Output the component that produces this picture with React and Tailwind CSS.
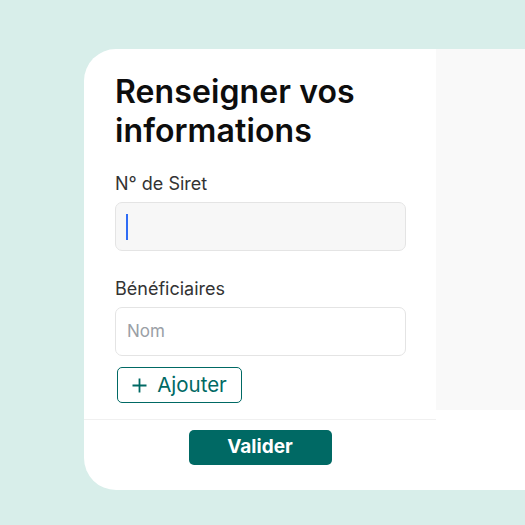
export default function App() {
  return (
    <div className="w-[525px] h-[525px] bg-[#d8eeea] pt-[49px] pl-[84px] overflow-hidden" style={{ fontFamily: "Inter, 'Noto Sans', sans-serif" }}>
      <div className="flex h-[441px] bg-white rounded-l-[32px] overflow-hidden">
        <div className="w-[352px] flex flex-col">
          <div className="pl-[31px] pr-[30px] pt-[23px] h-[371px] border-b border-[#f0f0f0]">
            <h1 className="text-[32px] leading-[39px] font-semibold text-[#0d0d0d] tracking-[0.1px]">
              Renseigner vos informations
            </h1>
            <div className="mt-[20px] text-[18px] leading-[27px] text-[#333]">N° de Siret</div>
            <div className="mt-[5px] h-[49px] rounded-[7px] border border-[#e4e4e4] bg-[#f7f7f7] flex items-center pl-[10px]">
              <div className="w-[2px] h-[26px] bg-[#2f6cf5]" />
            </div>
            <div className="mt-[24px] text-[18px] leading-[27px] text-[#333]">Bénéficiaires</div>
            <div className="mt-[5px] h-[49px] rounded-[7px] border border-[#e4e4e4] bg-white flex items-center pl-[11px] text-[17px] text-[#9aa0a6]">
              Nom
            </div>
            <button className="mt-[11px] ml-[2px] w-[125px] h-[36px] rounded-[5px] border-[1.5px] border-[#006964] text-[#006964] flex items-center justify-center gap-[10px] text-[20.5px]">
              <svg width="15" height="15" viewBox="0 0 15 15" fill="none" stroke="#006964" strokeWidth="1.8">
                <path d="M7.5 0.5V14.5M0.5 7.5H14.5" />
              </svg>
              <span>Ajouter</span>
            </button>
          </div>
          <div className="flex justify-center pt-[10px]">
            <button className="w-[143px] h-[35px] rounded-[5px] bg-[#006964] text-white font-bold text-[19px] flex items-center justify-center">
              Valider
            </button>
          </div>
        </div>
        <div className="flex-1">
          <div className="h-[361px] bg-[#f9f9f9]" />
        </div>
      </div>
    </div>
  );
}
